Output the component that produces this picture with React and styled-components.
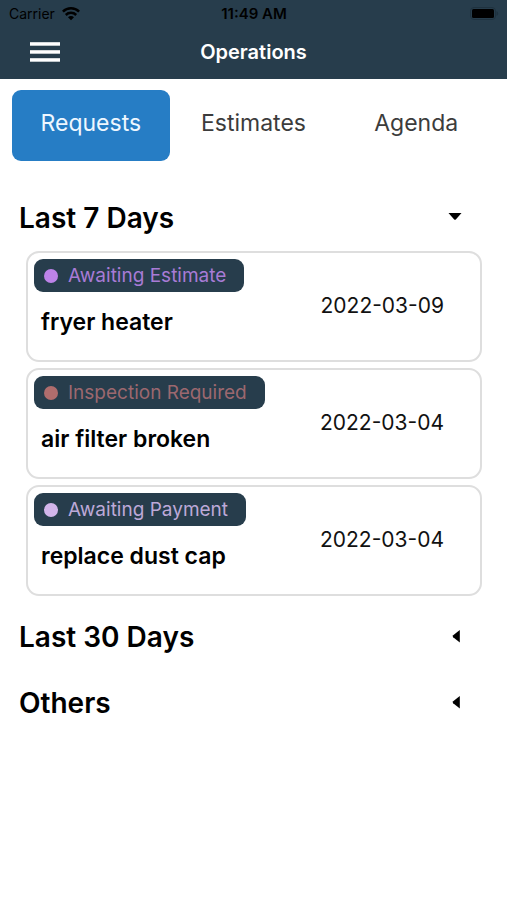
import React, { useState } from "react";
import styled, { createGlobalStyle } from "styled-components";

const GlobalStyle = createGlobalStyle`
  :root {
    --navy: #273d4c;
    --blue: #267dc5;
    --border: #dedede;
  }
  * {
    box-sizing: border-box;
  }
  body {
    margin: 0;
    background: #fff;
    color: #000;
    font-family: Inter, "Liberation Sans", sans-serif;
  }
  button {
    border: 0;
    padding: 0;
    background: none;
    color: inherit;
    font: inherit;
    cursor: pointer;
  }
`;

const Header = styled.header`
  background: var(--navy);
`;

const StatusBar = styled.div`
  display: grid;
  grid-template-columns: 1fr auto 1fr;
  align-items: center;
  height: 27px;
  padding: 0 8px 0 9px;
  font-size: 14px;
  line-height: 20px;

  .carrier {
    display: flex;
    align-items: center;
    gap: 7px;
  }
  .time {
    font-size: 15px;
    font-weight: 600;
  }
  .battery {
    justify-self: end;
  }
  svg {
    display: block;
  }
`;

const NavBar = styled.div`
  display: grid;
  grid-template-columns: 1fr auto 1fr;
  align-items: center;
  height: 52px;
  padding: 0 30px 2px;
  color: #fff;

  h1 {
    margin: 0;
    font-size: 20px;
    line-height: 28px;
    font-weight: 600;
  }
  svg {
    display: block;
  }
`;

const MenuButton = styled.button`
  justify-self: start;
`;

const Tabs = styled.nav`
  display: grid;
  grid-template-columns: repeat(3, 1fr);
  gap: 5px;
  padding: 11px 12px 24px;
`;

const Tab = styled.button`
  && {
    height: 71px;
    padding-bottom: 6px;
    border-radius: 9px;
    background: ${(props) => (props.$active ? "var(--blue)" : "transparent")};
    color: ${(props) => (props.$active ? "#eef7ff" : "#3c3c3c")};
    font-size: 23px;
    line-height: 28px;
  }
`;

const SectionHeading = styled.h2`
  margin: 0;
  font-size: 28px;
  line-height: 36px;
  font-weight: 600;
`;

const SectionToggle = styled.button`
  && {
    display: flex;
    justify-content: space-between;
    align-items: center;
    width: 100%;
    height: 66px;
    padding: 0 45px 0 19px;
    text-align: left;
  }
`;

const CardList = styled.ul`
  display: grid;
  gap: 6px;
  margin: 0 25px 8px 26px;
  padding: 0;
  list-style: none;
`;

const Card = styled.li`
  display: flex;
  justify-content: space-between;
  align-items: center;
  height: 111px;
  padding: 0 36px 2px 6px;
  border: 2px solid var(--border);
  border-radius: 13px;

  h3 {
    margin: 16px 0 0 7px;
    font-size: 23px;
    line-height: 28px;
    font-weight: 600;
  }
  time {
    font-size: 21px;
    line-height: 28px;
    color: #111;
  }
`;

const CardInfo = styled.div`
  align-self: flex-start;
  padding-top: 6px;
`;

const Badge = styled.span`
  display: flex;
  align-items: center;
  gap: 10px;
  width: fit-content;
  height: 33px;
  padding: 0 18px 0 10px;
  border-radius: 9px;
  background: var(--navy);
  color: ${(props) => props.$color};
  font-size: 19px;
  line-height: 28px;

  i {
    width: 14px;
    height: 14px;
    border-radius: 50%;
    background: ${(props) => props.$dot};
  }
`;

const statuses = {
  estimate: { label: "Awaiting Estimate", color: "#a87bd6", dot: "#bd83e8" },
  inspection: { label: "Inspection Required", color: "#9c686f", dot: "#b06d6d" },
  payment: { label: "Awaiting Payment", color: "#bda9d8", dot: "#d2b5ea" },
};

const sections = [
  {
    title: "Last 7 Days",
    requests: [
      { name: "fryer heater", date: "2022-03-09", status: "estimate" },
      { name: "air filter broken", date: "2022-03-04", status: "inspection" },
      { name: "replace dust cap", date: "2022-03-04", status: "payment" },
    ],
  },
  { title: "Last 30 Days", requests: [] },
  { title: "Others", requests: [] },
];

const tabs = ["Requests", "Estimates", "Agenda"];

function WifiIcon() {
  return (
    <svg width="18" height="14" viewBox="0 0 18 14" aria-hidden="true">
      <g fill="none" stroke="#000" strokeWidth="2.5">
        <path d="M0.9 4.6a11.6 11.6 0 0 1 16.2 0" />
        <path d="M3.8 8a7.4 7.4 0 0 1 10.4 0" />
      </g>
      <path d="M9 13.2 6 10.3a4.2 4.2 0 0 1 6 0z" />
    </svg>
  );
}

function BatteryIcon() {
  return (
    <svg width="29" height="14" viewBox="0 0 29 14" aria-hidden="true">
      <rect x="0.5" y="0.5" width="25" height="12" rx="3.5" fill="none" stroke="#1f323f" />
      <rect x="2" y="2" width="22" height="9" rx="1.5" />
      <path d="M26.5 4v5a2.7 2.7 0 0 0 0-5z" fill="#1f323f" />
    </svg>
  );
}

function MenuIcon() {
  return (
    <svg width="30" height="20" viewBox="0 0 30 20" fill="#fff" aria-hidden="true">
      <rect y="0.2" width="30" height="3.5" />
      <rect y="8.2" width="30" height="3.5" />
      <rect y="16.2" width="30" height="3.5" />
    </svg>
  );
}

function Caret({ open }) {
  return (
    <svg width="14" height="14" viewBox="0 0 14 14" aria-hidden="true">
      <path d={open ? "M0.5 2h13L8 8.2q-1 1-2 0z" : "M11.8 0v12.4L5.2 7.2q-1-1 0-2z"} />
    </svg>
  );
}

function Section({ title, requests, defaultOpen }) {
  const [open, setOpen] = useState(defaultOpen);

  return (
    <section>
      <SectionHeading>
        <SectionToggle aria-expanded={open} onClick={() => setOpen(!open)}>
          {title}
          <Caret open={open} />
        </SectionToggle>
      </SectionHeading>
      {open && (
        <CardList>
          {requests.map(({ name, date, status }) => (
            <Card key={name}>
              <CardInfo>
                <Badge $color={statuses[status].color} $dot={statuses[status].dot}>
                  <i />
                  {statuses[status].label}
                </Badge>
                <h3>{name}</h3>
              </CardInfo>
              <time dateTime={date}>{date}</time>
            </Card>
          ))}
        </CardList>
      )}
    </section>
  );
}

export default function App() {
  const [active, setActive] = useState("Requests");

  return (
    <>
      <GlobalStyle />
      <Header>
        <StatusBar>
          <span className="carrier">
            Carrier
            <WifiIcon />
          </span>
          <span className="time">11:49 AM</span>
          <span className="battery">
            <BatteryIcon />
          </span>
        </StatusBar>
        <NavBar>
          <MenuButton aria-label="Menu">
            <MenuIcon />
          </MenuButton>
          <h1>Operations</h1>
        </NavBar>
      </Header>
      <Tabs>
        {tabs.map((tab) => (
          <Tab key={tab} $active={tab === active} onClick={() => setActive(tab)}>
            {tab}
          </Tab>
        ))}
      </Tabs>
      <main>
        {sections.map((section, i) => (
          <Section key={section.title} {...section} defaultOpen={i === 0} />
        ))}
      </main>
    </>
  );
}
